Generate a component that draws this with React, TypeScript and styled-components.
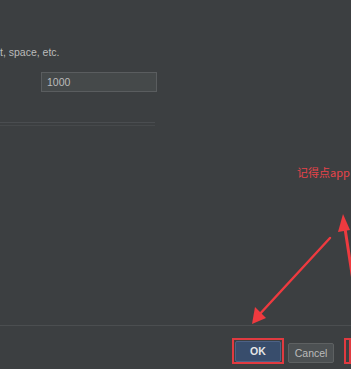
import React from "react";
import styled, { createGlobalStyle } from "styled-components";

const GlobalStyle = createGlobalStyle`
  html, body {
    margin: 0;
    padding: 0;
    background: #3c3f41;
  }
  body {
    font-family: "Liberation Sans", "Noto Sans CJK SC", sans-serif;
    overflow: hidden;
  }
`;

const Dialog = styled.div`
  position: relative;
  width: 351px;
  height: 369px;
  background: #3c3f41;
  display: flex;
  flex-direction: column;
  overflow: hidden;
`;

const Content = styled.div`
  height: 325px;
  display: flex;
  flex-direction: column;
  padding-top: 46px;
  box-sizing: border-box;
`;

const Hint = styled.div`
  color: #bbbbbb;
  font-size: 10.5px;
  line-height: 13px;
  white-space: nowrap;
`;

const FieldRow = styled.div`
  display: flex;
  align-items: center;
  margin-top: 13px;
  padding-left: 41px;
`;

const TextField = styled.div`
  width: 109px;
  height: 18px;
  background: #45494a;
  border: 1px solid #5a5d5f;
  color: #bbbbbb;
  font-size: 10.5px;
  line-height: 18px;
  padding-left: 5px;
  box-sizing: content-box;
`;

const Separator = styled.div`
  width: 155px;
  margin-top: 30px;
  border-top: 1px solid #4a4d50;
  border-bottom: 1px solid #46494b;
  height: 2px;
`;

const Footer = styled.div`
  flex: 1;
  border-top: 1px solid #4b4e50;
  display: flex;
  align-items: flex-start;
  padding-top: 12px;
  padding-left: 232px;
  gap: 4px;
`;

const Highlight = styled.div<{ $partial?: boolean }>`
  border: 2px solid #e03a40;
  height: 20px;
  padding: 1px;
  display: flex;
  ${(p) => (p.$partial ? "width: 20px; margin-left: 6px;" : "")}
`;

const Button = styled.div<{ $primary?: boolean }>`
  height: ${(p) => (p.$primary ? "19px" : "18px")};
  line-height: ${(p) => (p.$primary ? "19px" : "18px")};
  box-sizing: content-box;
  padding: 0 ${(p) => (p.$primary ? "14px" : "6px")};
  border: 1px solid ${(p) => (p.$primary ? "#4d6286" : "#5e6162")};
  background: ${(p) => (p.$primary ? "#384d6c" : "#4c5052")};
  color: ${(p) => (p.$primary ? "#e6e6e6" : "#bbbbbb")};
  font-weight: ${(p) => (p.$primary ? "bold" : "normal")};
  font-size: 10.5px;
  border-radius: 2px;
`;

const CancelWrap = styled.div`
  margin-top: 5px;
`;

const Note = styled.div`
  position: absolute;
  left: 297px;
  top: 164px;
  color: #e8434a;
  font-size: 11px;
  white-space: nowrap;
  font-family: "Noto Sans CJK SC", "Liberation Sans", sans-serif;
`;

const Arrows = styled.svg`
  position: absolute;
  left: 0;
  top: 0;
  pointer-events: none;
`;

export default function App() {
  return (
    <>
      <GlobalStyle />
      <Dialog>
        <Content>
          <Hint>t, space, etc.</Hint>
          <FieldRow>
            <TextField>1000</TextField>
          </FieldRow>
          <Separator />
        </Content>
        <Footer>
          <Highlight>
            <Button $primary>OK</Button>
          </Highlight>
          <CancelWrap>
            <Button>Cancel</Button>
          </CancelWrap>
          <Highlight $partial />
        </Footer>
        <Note>记得点app</Note>
        <Arrows width="351" height="369" viewBox="0 0 351 369">
          <path d="M330 238 L258 316" stroke="#ee3a3f" strokeWidth="2.4" strokeLinecap="round" />
          <path d="M252 324 L255 307 L266 318 Z" fill="#ee3a3f" />
          <path d="M344 222 L356 300" stroke="#ee3a3f" strokeWidth="3" strokeLinecap="round" />
          <path d="M343 214 L338 232 L350 230 Z" fill="#ee3a3f" />
        </Arrows>
      </Dialog>
    </>
  );
}
